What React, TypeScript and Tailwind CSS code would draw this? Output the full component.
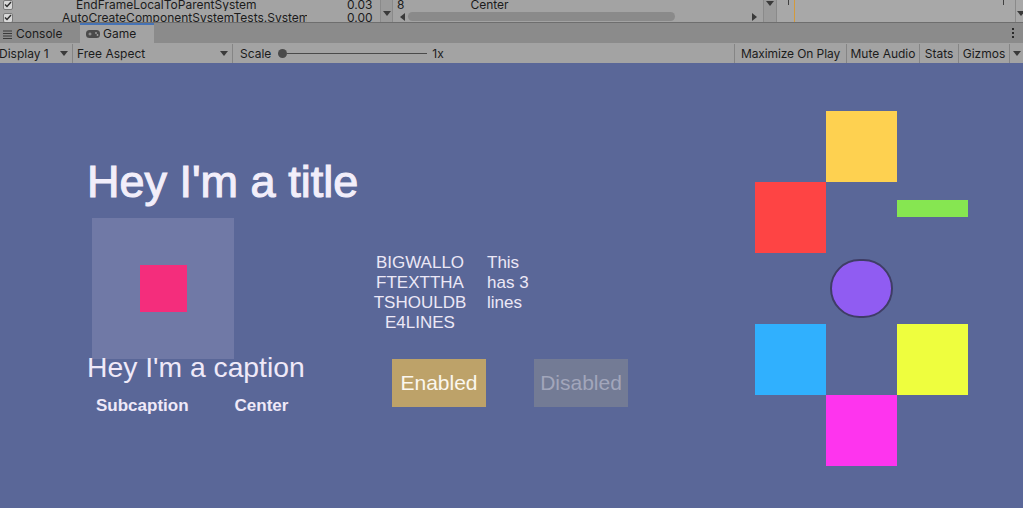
const Down = ({ className = "" }: { className?: string }) => (
  <svg width="8" height="5" viewBox="0 0 8 5" className={className}>
    <path d="M0 0h8L4 5z" fill="#3a3a3a" />
  </svg>
);

const Left = () => (
  <svg width="5" height="8" viewBox="0 0 5 8">
    <path d="M5 0v8L0 4z" fill="#3a3a3a" />
  </svg>
);

const Right = () => (
  <svg width="5" height="8" viewBox="0 0 5 8">
    <path d="M0 0v8l5-4z" fill="#3a3a3a" />
  </svg>
);

const Check = () => (
  <span className="ml-[3px] w-[10px] h-[10px] rounded-[2px] bg-[#d8d8d8] border border-[#7a7a7a] flex items-center justify-center shrink-0">
    <svg width="8" height="7" viewBox="0 0 8 7">
      <path d="M1 3.5l2 2L7 1" stroke="#2a2a2a" strokeWidth="1.4" fill="none" />
    </svg>
  </span>
);

const rows = [
  { name: "EndFrameLocalToParentSystem", pad: "pl-[63px]", value: "0.03" },
  { name: "AutoCreateComponentSystemTests.System", pad: "pl-[49px]", value: "0.00" },
];

function TopStrip() {
  return (
    <div className="h-[23px] flex bg-[#a3a3a3] border-b border-[#6e6e6e] overflow-hidden">
      <div className="w-[380px] flex flex-col -mt-[2px]">
        {rows.map((r) => (
          <div key={r.name} className="h-[13px] flex items-center leading-[13px]">
            <Check />
            <div className={`w-[294px] overflow-hidden whitespace-nowrap ${r.pad}`}>{r.name}</div>
            <span className="ml-[40px]">{r.value}</span>
          </div>
        ))}
      </div>
      <div className="w-[13px] bg-[#9b9b9b] border-l border-r border-[#8a8a8a] flex items-start justify-center pt-[11px]">
        <Down />
      </div>
      <div className="w-[370px] flex flex-col -mt-[2px]">
        <div className="h-[13px] flex items-center leading-[13px] whitespace-nowrap">
          <span className="ml-[4px]">8</span>
          <span className="ml-[66px]">Center</span>
        </div>
        <div className="h-[11px] flex items-center pl-[7px] pr-[6px]">
          <Left />
          <div className="ml-[3px] w-[267px] h-[9px] rounded-full bg-[#8a8a8a]" />
          <div className="flex-1" />
          <Right />
        </div>
      </div>
      <div className="w-[14px] bg-[#9b9b9b] border-l border-r border-[#8a8a8a] flex items-start justify-center pt-[1px]">
        <Down />
      </div>
      <div className="flex-1 relative bg-[#a8a8a8]">
        <div className="absolute left-[11px] top-0 w-px h-[5px] bg-[#404040]" />
        <div className="absolute left-[17px] top-0 w-px h-full bg-[#d39a3c]" />
        <div className="absolute left-[226px] top-0 w-px h-[5px] bg-[#404040]" />
        <div className="absolute left-[238px] top-0 w-px h-full bg-[#8a8a8a]" />
        <Down className="absolute left-[240px] top-[11px]" />
      </div>
    </div>
  );
}

function TabBar() {
  return (
    <div className="h-[20px] flex bg-[#8b8b8b]">
      <div className="w-[80px] flex items-center pt-[2px]">
        <svg width="9" height="9" viewBox="0 0 9 9" className="ml-[3px]">
          <path d="M0 1h9M0 3.5h9M0 6h9M0 8.5h9" stroke="#3a3a3a" strokeWidth="1.2" />
        </svg>
        <span className="ml-[4px]">Console</span>
      </div>
      <div className="w-[74px] flex items-center bg-[#a3a3a3] border-t-2 border-[#4673b5]">
        <svg width="14" height="8" viewBox="0 0 14 8" className="ml-[6px]">
          <rect x="0" y="0" width="14" height="8" rx="3.5" fill="#4a4a4a" />
          <path d="M2.5 4h3M4 2.5v3" stroke="#a3a3a3" strokeWidth="1" />
          <circle cx="10" cy="3" r="0.9" fill="#a3a3a3" />
          <circle cx="11.5" cy="5" r="0.9" fill="#a3a3a3" />
        </svg>
        <span className="ml-[3px]">Game</span>
      </div>
      <div className="flex-1" />
      <div className="w-[12px] flex flex-col items-center justify-center gap-[2px] mr-[4px]">
        <span className="w-[2px] h-[2px] bg-[#2a2a2a]" />
        <span className="w-[2px] h-[2px] bg-[#2a2a2a]" />
        <span className="w-[2px] h-[2px] bg-[#2a2a2a]" />
      </div>
    </div>
  );
}

function Toolbar() {
  return (
    <div className="h-[20px] flex items-stretch bg-[#a3a3a3] whitespace-nowrap pt-[1px]">
      <div className="w-[73px] flex items-center border-r border-[#858585]">
        <span className="-ml-[1px]">Display 1</span>
        <Down className="ml-auto mr-[4px]" />
      </div>
      <div className="w-[160px] flex items-center border-r border-[#858585]">
        <span className="ml-[4px]">Free Aspect</span>
        <Down className="ml-auto mr-[4px]" />
      </div>
      <div className="w-[501px] flex items-center">
        <span className="ml-[7px]">Scale</span>
        <div className="ml-[7px] w-[9px] h-[9px] rounded-full bg-[#4a4a4a]" />
        <div className="w-[140px] h-px bg-[#4a4a4a]" />
        <span className="ml-[5px]">1x</span>
      </div>
      <div className="w-[112px] flex items-center justify-center border-l border-[#858585] tracking-[-0.1px]">Maximize On Play</div>
      <div className="w-[73px] flex items-center justify-center border-l border-[#858585]">Mute Audio</div>
      <div className="w-[39px] flex items-center justify-center border-l border-[#858585]">Stats</div>
      <div className="w-[51px] flex items-center justify-center border-l border-[#858585]">Gizmos</div>
      <div className="flex-1 flex items-center justify-center border-l border-[#858585]">
        <Down />
      </div>
    </div>
  );
}

function GameView() {
  return (
    <div className="flex-1 flex pl-[87px] bg-[#5a6798] font-['Liberation_Sans',Arial,sans-serif] text-[#efe9f8]">
      <div className="w-[283px] pt-[95px] flex flex-col">
        <div className="text-[45px] leading-[48px] whitespace-nowrap text-[#f2eefa] [-webkit-text-stroke:1.1px_#f2eefa]">Hey I'm a title</div>
        <div className="mt-[12px] ml-[5px] w-[142px] h-[141px] bg-[#7079a6] flex items-center justify-center">
          <div className="w-[47px] h-[47px] bg-[#f42d7c]" />
        </div>
        <div className="-mt-[8px] text-[28.3px] leading-[32px] whitespace-nowrap">Hey I'm a caption</div>
        <div className="mt-[13px] flex text-[17px] leading-[20px] font-bold whitespace-nowrap">
          <span className="ml-[9px]">Subcaption</span>
          <span className="ml-[46px]">Center</span>
        </div>
      </div>

      <div className="w-[385px] pt-[190px] flex flex-col">
        <div className="flex text-[17px] leading-[20px] text-[#ece8f6]">
          <div className="w-[100px] text-center">
            <div>BIGWALLO</div>
            <div>FTEXTTHA</div>
            <div>TSHOULDB</div>
            <div>E4LINES</div>
          </div>
          <div className="ml-[17px]">
            <div>This</div>
            <div>has 3</div>
            <div>lines</div>
          </div>
        </div>
        <div className="mt-[26px] ml-[22px] flex gap-[48px] text-[21px]">
          <div className="w-[94px] h-[48px] bg-[#bda269] text-[#fbf7ef] flex items-center justify-center">Enabled</div>
          <div className="w-[94px] h-[48px] bg-[#737b95] text-[#a2a6bb] flex items-center justify-center">Disabled</div>
        </div>
      </div>

      <div className="pt-[48px]">
        <div className="grid grid-cols-[repeat(3,71px)] grid-rows-[repeat(5,71px)]">
          <div className="col-start-2 row-start-1 bg-[#fed150]" />
          <div className="col-start-1 row-start-2 bg-[#fe4444]" />
          <div className="col-start-3 row-start-2 self-start mt-[18px] h-[17px] bg-[#86e651]" />
          <div className="col-start-2 row-start-3 flex items-center justify-center">
            <div className="w-[63px] h-[59px] rounded-full bg-[#905cf2] border-2 border-[#3f3d66]" />
          </div>
          <div className="col-start-1 row-start-4 bg-[#30b0fe]" />
          <div className="col-start-3 row-start-4 bg-[#eefe3e]" />
          <div className="col-start-2 row-start-5 bg-[#fe34ee]" />
        </div>
      </div>
    </div>
  );
}

export default function App() {
  return (
    <div className="w-[1023px] h-[508px] overflow-hidden flex flex-col font-['Inter',sans-serif] text-[12px] text-[#1b1b1b]">
      <TopStrip />
      <TabBar />
      <Toolbar />
      <GameView />
    </div>
  );
}
